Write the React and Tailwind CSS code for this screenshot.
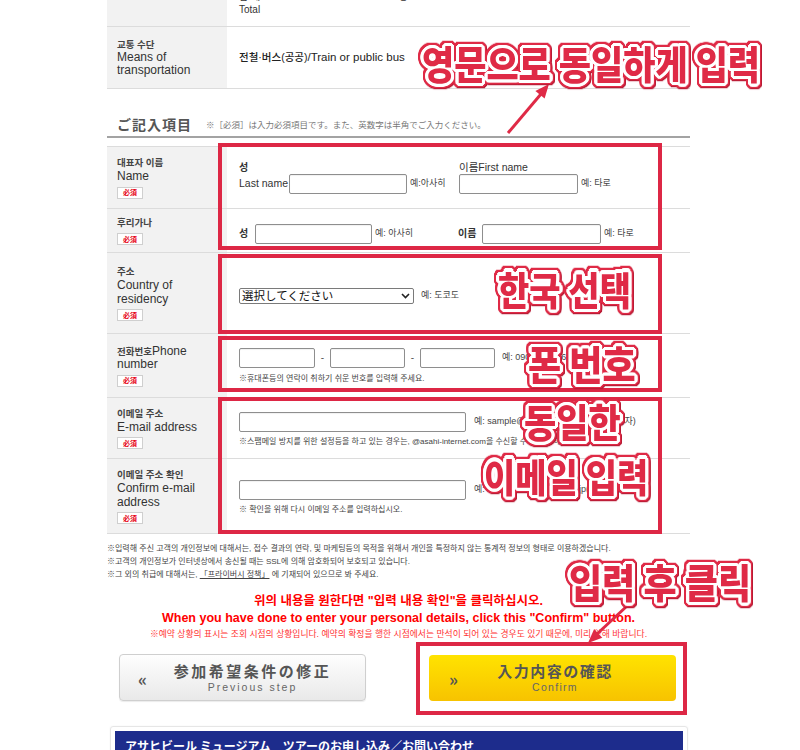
import React from "react";

const ANN =
  "absolute whitespace-nowrap origin-top-left scale-y-[1.12] font-['Noto_Sans_CJK_KR',sans-serif] font-black text-[#df2a46] leading-none [text-shadow:3px_0_0_#fff,-3px_0_0_#fff,0_3px_0_#fff,0_-3px_0_#fff,2px_2px_0_#fff,-2px_2px_0_#fff,2px_-2px_0_#fff,-2px_-2px_0_#fff,3px_1px_0_#fff,3px_-1px_0_#fff,-3px_1px_0_#fff,-3px_-1px_0_#fff,1px_3px_0_#fff,-1px_3px_0_#fff,1px_-3px_0_#fff,-1px_-3px_0_#fff] [filter:drop-shadow(1.5px_0_0_#df2a46)_drop-shadow(-1.5px_0_0_#df2a46)_drop-shadow(0_1.5px_0_#df2a46)_drop-shadow(0_-1.5px_0_#df2a46)_drop-shadow(1px_1px_0_#b81c35)]";

function Badge() {
  return (
    <div className="mt-[3px] w-[26px] h-[12px] flex items-center justify-center bg-white border border-[#cfcfcf] text-[7px] font-bold leading-none text-[#e60012] font-['Noto_Sans_CJK_JP',sans-serif]">
      必須
    </div>
  );
}

function Label({ ko, en }) {
  return (
    <div className="w-[120px] shrink-0 bg-[#f2f2f2] pl-[10px] flex flex-col justify-center">
      {ko && (
        <div className="text-[9.5px] leading-[14px] font-bold text-[#444]">{ko}</div>
      )}
      {en && <div className="text-[12px] leading-[13.5px] text-[#333]">{en}</div>}
      <Badge />
    </div>
  );
}

function Field({ className }) {
  return (
    <input
      type="text"
      className={
        "h-[20px] border border-[#8e8e8e] rounded-[2px] bg-white shadow-[inset_0_1px_1px_rgba(0,0,0,0.06)] outline-none " +
        className
      }
    />
  );
}

export default function App() {
  return (
    <div className="relative w-[800px] h-[750px] overflow-hidden bg-white font-['Liberation_Sans','Noto_Sans_CJK_KR',sans-serif] text-[#333]">
      <div className="ml-[107px] w-[583px]">
        {/* Total row (cut) */}
        <div className="flex h-[27px] border-b border-[#dcdcdc]">
          <div className="w-[120px] shrink-0 bg-[#f2f2f2]" />
          <div className="flex-1 pl-[12px] flex flex-col justify-end pb-[10px] text-[10px] leading-[13px]">
            <div>합 계　　　　　　　　　　　　　2 명</div>
            <div>Total</div>
          </div>
        </div>

        {/* Transport row */}
        <div className="flex h-[62px] border-b border-[#dcdcdc]">
          <div className="w-[120px] shrink-0 bg-[#f2f2f2] pl-[10px] flex flex-col justify-center">
            <div className="text-[9.5px] leading-[13px] font-bold text-[#444]">교통 수단</div>
            <div className="text-[12px] leading-[13px]">Means of</div>
            <div className="text-[12px] leading-[13px]">transportation</div>
          </div>
          <div className="flex-1 pl-[12px] flex items-center text-[11.5px] font-medium text-[#222]">
            <span className="text-[10.5px]">전철·버스(공공)</span>/Train or public bus
          </div>
        </div>

        {/* Heading */}
        <div className="mt-[26px] h-[23px] pb-[3px] border-b-2 border-[#a3a3a3] flex items-center pl-[10px]">
          <span className="text-[14px] font-bold text-[#555] tracking-[1px] font-['Noto_Sans_CJK_JP',sans-serif]">
            ご記入項目
          </span>
          <span className="ml-[14px] text-[8.5px] text-[#777] font-['Noto_Sans_CJK_JP',sans-serif]">
            ※［必須］は入力必須項目です。また、英数字は半角でご入力ください。
          </span>
        </div>

        {/* Table */}
        <div className="mt-[8px] border-t border-[#dcdcdc]">
          {/* Name */}
          <div className="flex h-[62px] border-b border-[#dcdcdc]">
            <Label ko="대표자 이름" en="Name" />
            <div className="flex-1 pl-[12px] flex items-center text-[10.5px]">
              <div className="w-[220px] shrink-0">
                <div className="text-[10px] leading-[12px] font-bold">성</div>
                <div className="flex items-center">
                  <span className="w-[50px] shrink-0">Last name</span>
                  <Field className="w-[118px]" />
                  <span className="ml-[3px] text-[9px] text-[#444]">예:아사히</span>
                </div>
              </div>
              <div>
                <div className="text-[10.5px] leading-[10px] relative z-10">이름First name</div>
                <div className="flex items-center mt-[2px]">
                  <Field className="w-[119px]" />
                  <span className="ml-[3px] text-[9px] text-[#444]">예: 타로</span>
                </div>
              </div>
            </div>
          </div>

          {/* Furigana */}
          <div className="flex h-[44px] border-b border-[#dcdcdc]">
            <Label ko="후리가나" />
            <div className="flex-1 pl-[12px] pt-[6px] flex items-center text-[10px]">
              <div className="w-[219px] shrink-0 flex items-center">
                <span className="w-[16px] shrink-0 font-bold">성</span>
                <Field className="w-[117px]" />
                <span className="ml-[3px] text-[9px] text-[#444]">예: 아사히</span>
              </div>
              <div className="flex items-center">
                <span className="w-[24px] shrink-0 font-bold">이름</span>
                <Field className="w-[119px]" />
                <span className="ml-[3px] text-[9px] text-[#444]">예: 타로</span>
              </div>
            </div>
          </div>

          {/* Address */}
          <div className="flex h-[81px] border-b border-[#dcdcdc]">
            <Label ko="주소" en={<>Country of<br />residency</>} />
            <div className="flex-1 pl-[12px] pt-[6px] flex items-center">
              <div className="w-[175px] h-[16px] border border-[#7a7a7a] rounded-[2px] bg-white flex items-center justify-between pl-[2px] pr-[3px]">
                <span className="text-[11.5px] leading-none text-[#111] font-['Noto_Sans_CJK_JP',sans-serif]">選択してください</span>
                <svg width="9" height="6" viewBox="0 0 9 6">
                  <path d="M1 1l3.5 3.5L8 1" fill="none" stroke="#222" strokeWidth="1.6" />
                </svg>
              </div>
              <span className="ml-[7px] text-[9px] text-[#444]">예: 도코도</span>
            </div>
          </div>

          {/* Phone */}
          <div className="flex h-[64px] border-b border-[#dcdcdc]">
            <Label en={<><span className="text-[9.5px] font-bold text-[#444]">전화번호</span>Phone<br />number</>} />
            <div className="flex-1 pl-[12px] flex flex-col justify-center">
              <div className="flex items-center">
                <Field className="w-[76px]" />
                <span className="w-[15px] text-center text-[10px] text-[#555]">-</span>
                <Field className="w-[75px]" />
                <span className="w-[15px] text-center text-[10px] text-[#555]">-</span>
                <Field className="w-[75px]" />
                <span className="ml-[7px] text-[9px] text-[#444]">예: 090-1234-5678(반각 숫자)</span>
              </div>
              <div className="mt-[5px] text-[8px] leading-[11px] text-[#444]">
                ※휴대폰등의 연락이 취하기 쉬운 번호를 입력해 주세요.
              </div>
            </div>
          </div>

          {/* Email */}
          <div className="flex h-[61px] border-b border-[#dcdcdc]">
            <Label ko="이메일 주소" en="E-mail address" />
            <div className="flex-1 pl-[12px] pt-[2px] flex flex-col justify-center">
              <div className="flex items-center">
                <Field className="w-[227px]" />
                <span className="ml-[8px] text-[9px] text-[#444]">예: sample@asahibeer.co.jp(반각 영숫자)</span>
              </div>
              <div className="mt-[4px] text-[8px] leading-[11px] text-[#444] whitespace-nowrap">
                ※스팸메일 방지를 위한 설정등을 하고 있는 경우는, @asahi-internet.com을 수신할 수 있도록 해 주세요.
              </div>
            </div>
          </div>

          {/* Confirm email */}
          <div className="flex h-[75px] border-b border-[#dcdcdc]">
            <Label ko="이메일 주소 확인" en={<>Confirm e-mail<br />address</>} />
            <div className="flex-1 pl-[12px] pt-[2px] flex flex-col justify-center">
              <div className="flex items-center">
                <Field className="w-[227px]" />
                <span className="ml-[8px] text-[9px] text-[#444]">예: sample@asahibeer.co.jp(반각 영숫자)</span>
              </div>
              <div className="mt-[4px] text-[8px] leading-[11px] text-[#444]">
                ※ 확인을 위해 다시 이메일 주소를 입력하십시오.
              </div>
            </div>
          </div>
        </div>

        {/* Notes */}
        <div className="pt-[8px] text-[8px] leading-[13px] text-[#444] whitespace-nowrap">
          <div>※입력해 주신 고객의 개인정보에 대해서는, 접수 결과의 연락, 및 마케팅등의 목적을 위해서 개인을 특정하지 않는 통계적 정보의 형태로 이용하겠습니다.</div>
          <div>※고객의 개인정보가 인터넷상에서 송신될 때는 SSL에 의해 암호화되어 보호되고 있습니다.</div>
          <div>
            ※그 외의 취급에 대해서는, <span className="underline">「프라이버시 정책」</span> 에 기재되어 있으므로 봐 주세요.
          </div>
        </div>

        {/* Red messages */}
        <div className="mt-[12px] text-center text-[#f00] whitespace-nowrap">
          <div className="text-[12.5px] leading-[17px] font-bold">
            위의 내용을 원한다면 "입력 내용 확인"을 클릭하십시오.
          </div>
          <div className="text-[12.5px] leading-[17px] font-bold">
            When you have done to enter your personal details, click this "Confirm" button.
          </div>
          <div className="mt-[1px] text-[8.8px] leading-[12px] text-[#f33]">
            ※예약 상황의 표시는 조회 시점의 상황입니다. 예약의 확정을 행한 시점에서는 만석이 되어 있는 경우도 있기 때문에, 미리 양해 바랍니다.
          </div>
        </div>

        {/* Buttons */}
        <div className="mt-[14px] flex items-center pl-[12px] gap-[63px] font-['Noto_Sans_CJK_JP',sans-serif]">
          <div className="relative w-[247px] h-[47px] rounded-[4px] border border-[#cfcfcf] bg-gradient-to-b from-[#fefefe] to-[#e9e9e9] shadow-[0_1px_1px_rgba(0,0,0,0.08)] flex flex-col items-center justify-center pl-[20px]">
            <span className="absolute left-[18px] top-[15px] text-[17px] font-bold leading-none text-[#555]">«</span>
            <div className="text-[15px] font-bold leading-[19px] tracking-[2.5px] text-[#555]">参加希望条件の修正</div>
            <div className="text-[10.5px] leading-[14px] tracking-[2px] text-[#666] font-['Liberation_Sans',sans-serif]">Previous step</div>
          </div>
          <div className="relative w-[247px] h-[46px] rounded-[4px] bg-gradient-to-b from-[#ffe300] to-[#f7c300] flex flex-col items-center justify-center pl-[5px]">
            <span className="absolute left-[20px] top-[15px] text-[17px] font-bold leading-none text-[#555]">»</span>
            <div className="text-[15px] font-bold leading-[19px] tracking-[1.5px] text-[#555]">入力内容の確認</div>
            <div className="text-[10.5px] leading-[14px] tracking-[1.3px] text-[#666] font-['Liberation_Sans',sans-serif]">Confirm</div>
          </div>
        </div>

        {/* Bottom card */}
        <div className="mt-[25px] ml-[3px] w-[578px] border border-[#e6e6e6] rounded-[3px] p-[4px] shadow-[0_0_2px_rgba(0,0,0,0.05)]">
          <div className="bg-[#1d2c8c] h-[40px] pl-[10px] pt-[6px] text-white text-[12px] font-bold font-['Noto_Sans_CJK_JP',sans-serif]">
            アサヒビール ミュージアム　ツアーのお申し込み／お問い合わせ
          </div>
        </div>
      </div>

      {/* Red annotation boxes */}
      <div className="absolute left-[218px] top-[143px] w-[444px] h-[107px] border-[4px] border-[#dd2745]" />
      <div className="absolute left-[218px] top-[254px] w-[444px] h-[80px] border-[4px] border-[#dd2745]" />
      <div className="absolute left-[218px] top-[336px] w-[444px] h-[56px] border-[4px] border-[#dd2745]" />
      <div className="absolute left-[218px] top-[397px] w-[444px] h-[137px] border-[4px] border-[#dd2745]" />
      <div className="absolute left-[416px] top-[642px] w-[271px] h-[73px] border-[4px] border-[#dd2745]" />

      {/* Arrows */}
      <svg className="absolute left-0 top-0 pointer-events-none" width="800" height="750" viewBox="0 0 800 750">
        <line x1="508" y1="133" x2="541" y2="94" stroke="#df2a46" strokeWidth="3" />
        <polygon points="549,84 544.6,98.6 535.4,91" fill="#df2a46" />
        <line x1="627" y1="606" x2="597" y2="634" stroke="#df2a46" strokeWidth="3" />
        <polygon points="588,643 602.3,637.8 594.1,629" fill="#df2a46" />
      </svg>

      {/* Annotation texts */}
      <div className={ANN + " left-[422px] top-[42px] text-[35px]"}>영문으로 동일하게 입력</div>
      <div className={ANN + " left-[498px] top-[270px] text-[34px]"}>한국 선택</div>
      <div className={ANN + " left-[528px] top-[342px] text-[36px]"}>폰 번호</div>
      <div className={ANN + " left-[524px] top-[400px] text-[35px]"}>동일한</div>
      <div className={ANN + " left-[484px] top-[457px] text-[34px]"}>이메일 입력</div>
      <div className={ANN + " left-[569px] top-[560px] text-[36px]"}>입력 후 클릭</div>
    </div>
  );
}
